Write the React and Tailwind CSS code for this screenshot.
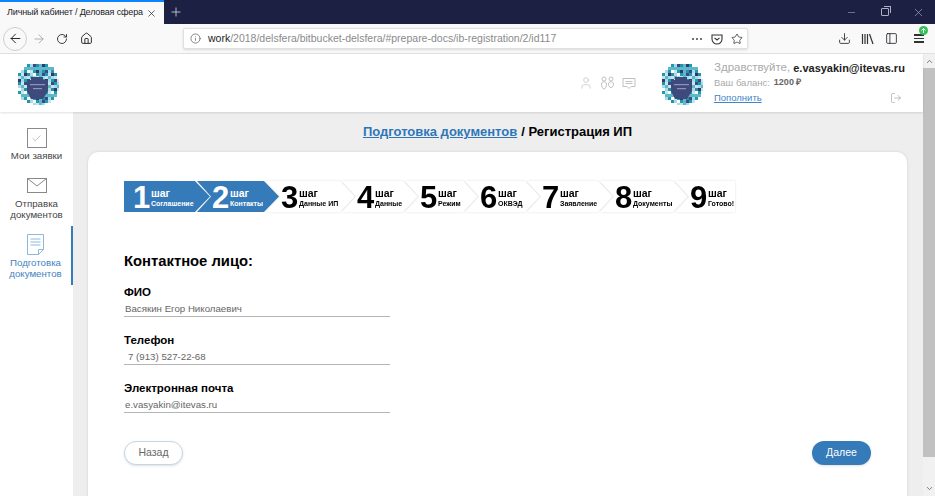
import React from 'react';
import { ArrowLeft, ArrowRight, RotateCw, Home, Info, Star, Download, PanelLeft, X, Plus, Minus, ChevronUp, ChevronDown, User, LogOut, Check } from 'lucide-react';

const steps = [
  { n: 1, sub: 'Соглашение', w: 'w-[86px]', blue: true, first: true },
  { n: 2, sub: 'Контакты', w: 'w-[82px]', blue: true },
  { n: 3, sub: 'Данные ИП', w: 'w-[89px]' },
  { n: 4, sub: 'Данные', w: 'w-[76px]' },
  { n: 5, sub: 'Режим', w: 'w-[73px]' },
  { n: 6, sub: 'ОКВЭД', w: 'w-[75px]' },
  { n: 7, sub: 'Заявление', w: 'w-[86px]' },
  { n: 8, sub: 'Документы', w: 'w-[88px]' },
  { n: 9, sub: 'Готово!', w: 'w-[60px]', last: true },
];

// мозаика логотипа: клетки внутри круга
const palette = ['#1d9bb0', '#a8dbe4', '#2b3a70', '#1d9bb0', '#5fb8c9', '#ffffff', '#2b8fa8', '#c4e6ec', '#3b4a85'];
const logoCells = [];
for (let y = 0; y < 15; y++) {
  for (let x = 0; x < 15; x++) {
    const cx = x * 3 + 0.5 - 22;
    const cy = y * 3 + 0.5 - 22;
    if (cx * cx + cy * cy > 21.5 * 21.5) continue;
    logoCells.push({ x: x * 3, y: y * 3, c: palette[(x * 5 + y * 11 + x * y * 2) % palette.length] });
  }
}

const Logo = () => (
  <svg width="44" height="44" viewBox="0 0 44 44" className="shrink-0 blur-[0.5px]">
    {logoCells.map((s, i) => <rect key={i} x={s.x} y={s.y} width="3" height="3" fill={s.c} />)}
    <path d="M12 19h4v-3h12v3h5v11l-5 8H16l-4-8z" fill="#3e4a7c" />
    <rect x="15" y="23" width="15" height="1.200" fill="#8d94b8" />
    <rect x="18" y="27" width="9" height="1.200" fill="#8d94b8" />
  </svg>
);

const Step = ({ n, sub, w, blue, first, last }) => (
  <div className={`${w} shrink-0 ${first ? '' : '-ml-[13px]'} ${blue ? '' : 'drop-shadow-[0_0_1px_rgba(0,0,0,0.13)]'}`}>
    <div
      className={`h-[31px] flex items-center ${first ? 'pl-[9px]' : 'pl-[15px]'} ${blue ? 'bg-[#357ab9] text-white' : 'bg-white text-black'} ${first ? '[clip-path:polygon(0_0,calc(100%-15px)_0,100%_50%,calc(100%-15px)_100%,0_100%)]' : last ? '[clip-path:polygon(0_0,100%_0,100%_100%,0_100%,14px_50%)]' : '[clip-path:polygon(0_0,calc(100%-15px)_0,100%_50%,calc(100%-15px)_100%,0_100%,14px_50%)]'}`}
    >
      <span className="text-[31px] leading-none font-bold w-[17px] mt-[2px]">{n}</span>
      <div className="flex flex-col ml-[1px] mt-[3px]">
        <span className="text-[10.5px] leading-[12px] font-bold">шаг</span>
        <span className="text-[7px] leading-[10px] font-bold whitespace-nowrap">{sub}</span>
      </div>
    </div>
  </div>
);

const Field = ({ label, value, indent }) => (
  <div className="w-[266px] h-[48px]">
    <div className="text-[11.5px] leading-[14px] font-bold text-black">{label}</div>
    <div className={`h-[18px] pt-[3px] border-b border-[#b5b5b5] text-[9.7px] leading-[14px] text-[#666] ${indent ? 'pl-[4px]' : 'pl-[1px]'}`}>{value}</div>
  </div>
);

export default function App() {
  return (
    <div className="w-[935px] h-[496px] overflow-hidden flex flex-col bg-white font-['Liberation_Sans',Arial,sans-serif]">
      {/* вкладки */}
      <div className="h-[24px] shrink-0 bg-[#1c2143] flex items-stretch">
        <div className="w-[164px] bg-[#f9f9fa] border-t-2 border-[#0a84ff] flex items-center justify-between pl-[7px] pr-[7px] text-[9px] tracking-[-0.15px] text-[#222]">
          <span className="whitespace-nowrap">Личный кабинет / Деловая сфера</span>
          <X size={11} strokeWidth={1.5} />
        </div>
        <div className="w-[24px] flex items-center justify-center">
          <Plus size={14} strokeWidth={1.5} className="text-[#c9cbd6]" />
        </div>
        <div className="ml-auto flex items-center text-[#aeb1c2]">
          <Minus size={11} strokeWidth={1.2} className="mr-[24px]" />
          <div className="relative w-[8px] h-[8px] border border-[#aeb1c2] rounded-[1px] mr-[23px] bg-[#1c2143]">
            <span className="absolute -top-[3px] -right-[3px] w-[7px] h-[7px] border-t border-r border-[#aeb1c2]" />
          </div>
          <X size={13} strokeWidth={1.2} className="mr-[10px]" />
        </div>
      </div>

      {/* панель адреса */}
      <div className="h-[30px] shrink-0 bg-[#f9f9fa] border-b border-[#e2e2e4] flex items-center text-[#2a2a2e]">
        <div className="ml-[3px] w-[24px] h-[24px] rounded-full border border-[#cfcfd2] flex items-center justify-center">
          <ArrowLeft size={15} strokeWidth={1.6} />
        </div>
        <ArrowRight size={14} strokeWidth={1.6} className="ml-[5px] text-[#a8a8aa]" />
        <RotateCw size={12} strokeWidth={1.8} className="ml-[10px]" />
        <Home size={13} strokeWidth={1.8} className="ml-[12px]" />
        <div className="ml-[90px] w-[565px] h-[21px] bg-white border border-[#e0e0e2] rounded-[2px] shadow-sm flex items-center pl-[6px] pr-[4px]">
          <Info size={11} strokeWidth={1.5} className="text-[#555]" />
          <span className="ml-[7px] text-[10.5px] text-[#8a8a8c] whitespace-nowrap"><span className="text-[#222]">work</span>/2018/delsfera/bitbucket-delsfera/#prepare-docs/ib-registration/2/id117</span>
          <div className="ml-auto flex items-center">
            <span className="flex gap-[2px]">
              <i className="w-[2px] h-[2px] bg-[#444] rounded-full" />
              <i className="w-[2px] h-[2px] bg-[#444] rounded-full" />
              <i className="w-[2px] h-[2px] bg-[#444] rounded-full" />
            </span>
            <svg width="12" height="12" viewBox="0 0 12 12" className="ml-[9px]" fill="none" stroke="#333" strokeWidth="1.1">
              <path d="M1 2h10v4a5 5 0 0 1-10 0z" />
              <path d="M3.500 4.800 6 7l2.500-2.200" />
            </svg>
            <Star size={12} strokeWidth={1.5} className="ml-[8px]" />
          </div>
        </div>
        <Download size={13} strokeWidth={1.6} className="ml-[90px]" />
        <svg width="13" height="12" viewBox="0 0 13 12" className="ml-[10px]" fill="none" stroke="#333" strokeWidth="1.2">
          <path d="M1.500 1v10M4 1v10M6.500 1v10M8.500 1l3.500 10" />
        </svg>
        <PanelLeft size={13} strokeWidth={1.6} className="ml-[11px]" />
        <div className="relative ml-[16px] flex flex-col gap-[2px]">
          <i className="w-[10px] h-[1.5px] bg-[#333]" />
          <i className="w-[10px] h-[1.5px] bg-[#333]" />
          <i className="w-[10px] h-[1.5px] bg-[#333]" />
          <svg width="9" height="9" viewBox="0 0 9 9" className="absolute -top-[8px] left-[5px]">
            <circle cx="4.500" cy="4.500" r="4.500" fill="#30c253" />
            <path d="M4.500 7V2.500M2.500 4.500l2-2 2 2" fill="none" stroke="#fff" strokeWidth="1" />
          </svg>
        </div>
      </div>

      {/* страница */}
      <div className="flex-1 min-h-0 flex">
        <div className="flex-1 min-w-0 flex flex-col">
          <header className="h-[58px] shrink-0 bg-white flex items-center pl-[15px] relative z-10 shadow-[0_1px_2px_rgba(0,0,0,0.12)]">
            <Logo />
            <div className="ml-[520px] flex items-center text-[#b9b9b9]">
              <User size={14} strokeWidth={1.1} />
              <svg width="15" height="14" viewBox="0 0 15 14" className="ml-[7px]" fill="none" stroke="#b9b9b9" strokeWidth="0.9">
                <circle cx="4" cy="3" r="2" /><circle cx="11" cy="3" r="2" />
                <path d="M1.500 8c0-3 5-3 5 0 0 2-1 5-2.500 5S1.500 10 1.500 8zM8.500 8c0-3 5-3 5 0 0 2-1 3.500-2.500 3.500S8.500 10 8.500 8z" />
              </svg>
              <svg width="14" height="13" viewBox="0 0 14 13" className="ml-[7px]" fill="none" stroke="#b9b9b9" strokeWidth="0.9">
                <path d="M1 1.500h12v8H9l-2 2-2-2H1z" /><path d="M3.500 4.500h7M3.500 6.500h7" />
              </svg>
            </div>
            <div className="ml-[23px]"><Logo /></div>
            <div className="ml-[11px] w-[192px] flex flex-col">
              <div className="flex items-center h-[16px] whitespace-nowrap">
                <span className="text-[11.5px] text-[#aaa]">Здравствуйте,</span>
                <span className="ml-[3px] text-[11px] font-bold text-[#222]">e.vasyakin@itevas.ru</span>
              </div>
              <div className="flex items-center h-[14px] whitespace-nowrap">
                <span className="text-[9.5px] text-[#aaa]">Ваш баланс:</span>
                <span className="ml-[4px] text-[9px] font-bold text-[#666]">1200 ₽</span>
              </div>
              <div className="flex items-center justify-between h-[16px]">
                <a className="text-[9.5px] text-[#3f85c9] underline">Пополнить</a>
                <LogOut size={12} strokeWidth={1.2} className="mr-[4px] text-[#999]" />
              </div>
            </div>
          </header>

          <div className="flex-1 min-h-0 flex">
            {/* боковое меню */}
            <aside className="w-[73px] shrink-0 bg-white shadow-[1px_0_2px_rgba(0,0,0,0.1)] flex flex-col items-center pt-[16px] text-[9.7px] leading-[11px] text-[#444] text-center">
              <div className="w-[20px] h-[20px] border border-[#8a8a8a] flex items-center justify-center">
                <Check size={11} strokeWidth={1} className="text-[#777]" />
              </div>
              <div className="mt-[2px] whitespace-nowrap">Мои заявки</div>
              <svg width="20" height="15" viewBox="0 0 20 15" className="mt-[17px]" fill="none" stroke="#888" strokeWidth="1">
                <rect x="0.500" y="0.500" width="19" height="14" /><path d="M0.500 0.500 10 8l9.500-7.500" />
              </svg>
              <div className="mt-[5px]">Отправка документов</div>
              <div className="w-[73px] h-[59px] mt-[6px] pt-[8px] border-r-2 border-[#357ab9] flex flex-col items-center text-[#3f7fc0]">
                <svg width="17" height="21" viewBox="0 0 17 21" fill="none" stroke="#8db8de" strokeWidth="1">
                  <path d="M0.500 0.500h16v15l-5 5h-11z" /><path d="M11.500 20.500v-5h5M3.500 5h10M3.500 8h10M3.500 11h10" />
                </svg>
                <div className="mt-[2px]">Подготовка документов</div>
              </div>
            </aside>

            {/* основная часть */}
            <main className="flex-1 min-w-0 bg-[#eeeeee] pl-[15px] pr-[16px] overflow-hidden">
              <h1 className="h-[40px] flex items-center justify-center text-[13px] font-bold text-black whitespace-nowrap">
                <a className="text-[#2f76b8] underline">Подготовка документов</a>
                <span className="ml-[4px]">/ Регистрация ИП</span>
              </h1>
              <section className="h-[400px] bg-white rounded-t-[10px] shadow-[0_0_3px_rgba(0,0,0,0.12)] pl-[36px] pr-[36px] pt-[29px]">
                <div className="flex">
                  {steps.map((s) => <Step key={s.n} {...s} />)}
                </div>
                <h2 className="mt-[39px] text-[14.8px] leading-[20px] font-bold text-black">Контактное лицо:</h2>
                <div className="mt-[14px] flex flex-col">
                  <Field label="ФИО" value="Васякин Егор Николаевич" />
                  <Field label="Телефон" value="7 (913) 527-22-68" indent />
                  <Field label="Электронная почта" value="e.vasyakin@itevas.ru" />
                </div>
                <div className="mt-[12px] flex justify-between">
                  <button className="w-[59px] h-[24px] rounded-full border border-[#c5d6e6] bg-white text-[10.5px] text-[#666] shadow-sm">Назад</button>
                  <button className="w-[59px] h-[24px] rounded-full bg-[#357ab9] text-[10.5px] text-white shadow-sm">Далее</button>
                </div>
              </section>
            </main>
          </div>
        </div>

        {/* полоса прокрутки */}
        <div className="w-[12px] shrink-0 bg-[#f1f1f1] flex flex-col items-center">
          <ChevronUp size={9} strokeWidth={2} className="mt-[3px] text-[#555]" />
          <div className="w-[12px] h-[389px] mt-[2px] bg-[#c1c1c1]" />
          <ChevronDown size={9} strokeWidth={2} className="mt-auto mb-[3px] text-[#555]" />
        </div>
      </div>
    </div>
  );
}
